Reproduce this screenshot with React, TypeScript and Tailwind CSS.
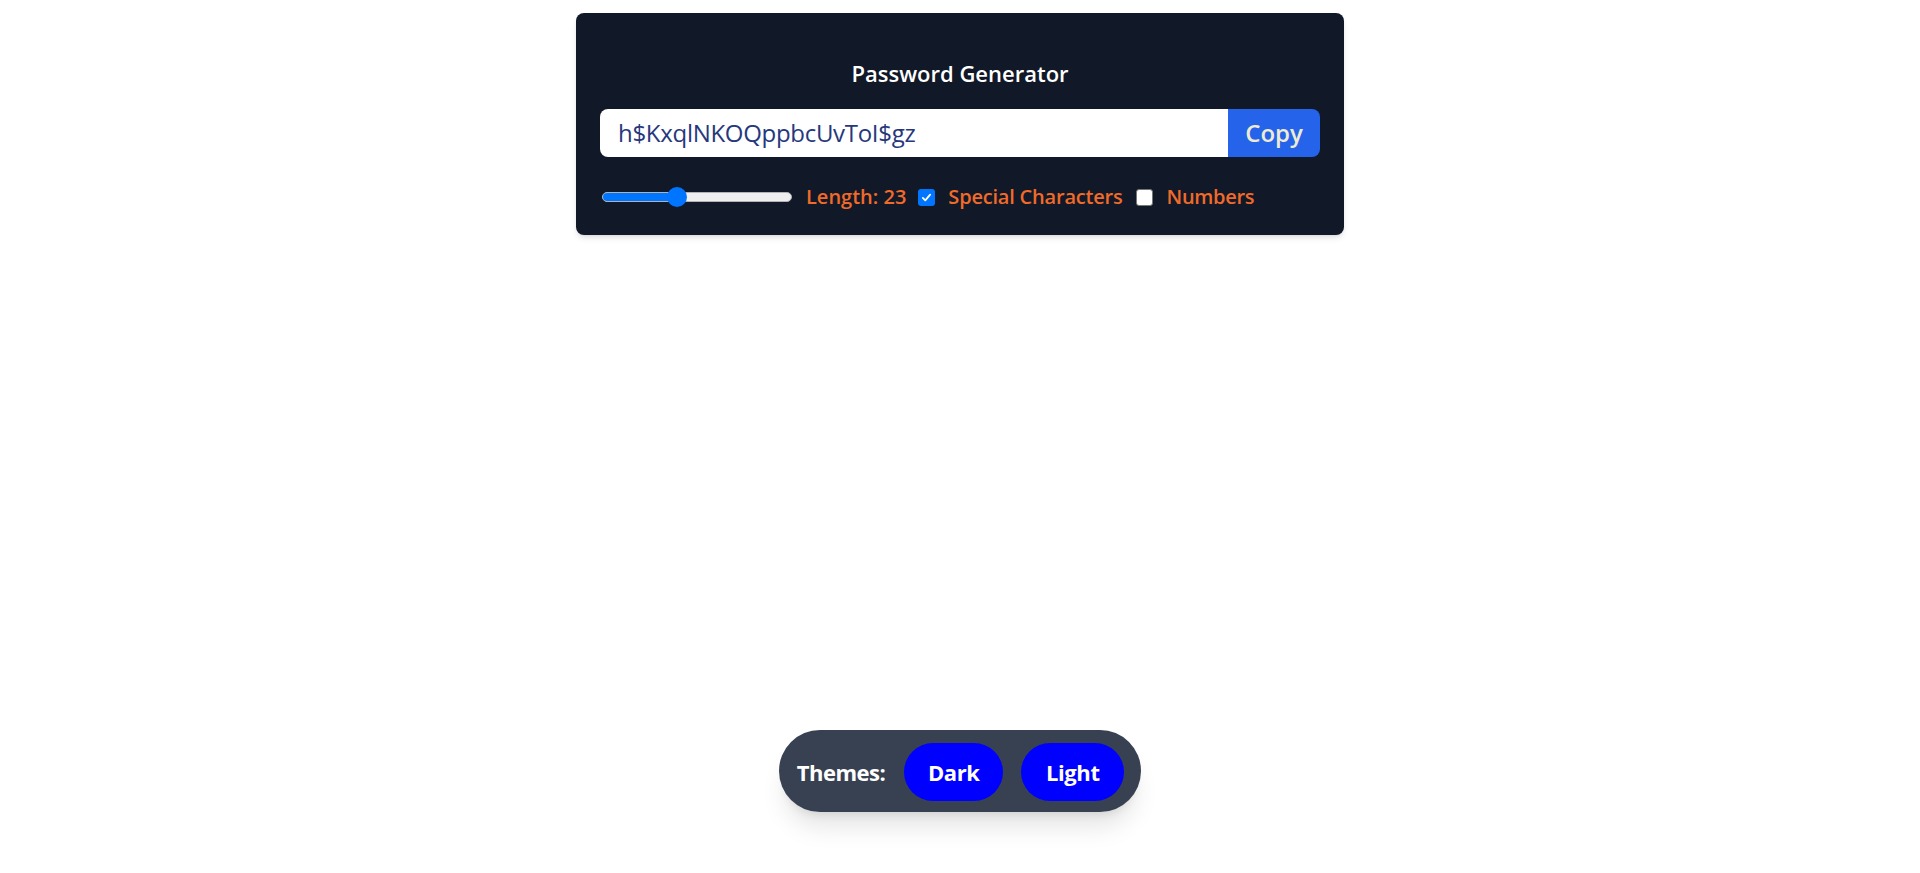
import { useState } from 'react';

function Checkbox({ checked, onToggle }: { checked: boolean; onToggle: () => void }) {
  return (
    <button
      onClick={onToggle}
      className={`w-[17px] h-[17px] rounded-[3px] flex items-center justify-center shrink-0 ${
        checked ? 'bg-[#0075ff]' : 'bg-white border border-[#767676]'
      }`}
    >
      {checked && (
        <svg viewBox="0 0 16 16" className="w-[13px] h-[13px]">
          <path d="M3.5 8.5 L6.5 11.5 L12.5 4.5" fill="none" stroke="white" strokeWidth="2.2" strokeLinecap="round" strokeLinejoin="round" />
        </svg>
      )}
    </button>
  );
}

export default function App() {
  const [length] = useState(23);
  const [special, setSpecial] = useState(true);
  const [numbers, setNumbers] = useState(false);
  const password = 'h$KxqlNKOQppbcUvToI$gz';
  const pct = ((length - 4) / (52 - 4)) * 100;

  return (
    <div className="w-full min-h-[873px] bg-white flex flex-col items-center font-['Open_Sans',sans-serif]">
      {/* Card */}
      <div className="w-[768px] mt-[13px] rounded-lg bg-[#111827] px-6 pt-[46px] pb-[24px] shadow-md">
        <h1 className="text-center text-white text-[22px] font-semibold leading-7 mb-[22px]">Password Generator</h1>

        <div className="flex h-12 rounded-lg overflow-hidden">
          <input
            readOnly
            value={password}
            className="flex-1 bg-white px-[18px] text-2xl tracking-[-0.3px] text-[#26387c] outline-none font-['Open_Sans',sans-serif]"
          />
          <button className="w-[92px] bg-[#2563eb] text-2xl font-semibold text-[#eeecd0]">Copy</button>
        </div>

        <div className="flex items-center mt-[26px] h-7 text-xl font-semibold text-[#f06a2a]">
          {/* Slider */}
          <div className="relative w-[190px] h-5 ml-[2px] flex items-center cursor-pointer">
            <div className="w-full h-[10px] rounded-full bg-[#efefef] border border-[#b2b2b2] overflow-hidden">
              <div className="h-full bg-[#0075ff]" style={{ width: `${pct}%` }} />
            </div>
            <div
              className="absolute w-5 h-5 rounded-full bg-[#0075ff] -translate-x-1/2"
              style={{ left: `${pct}%` }}
            />
          </div>
          <span className="ml-[14px]">Length: {length}</span>
          <div className="ml-[12px]">
            <Checkbox checked={special} onToggle={() => setSpecial(!special)} />
          </div>
          <span className="ml-[13px] tracking-[-0.2px]">Special Characters</span>
          <div className="ml-[13px]">
            <Checkbox checked={numbers} onToggle={() => setNumbers(!numbers)} />
          </div>
          <span className="ml-[14px] tracking-[-0.3px]">Numbers</span>
        </div>
      </div>

      <div className="flex-1" />

      {/* Theme switcher */}
      <div className="mb-[61px] flex items-center gap-[19px] rounded-full bg-[#374151] pl-[18px] pr-[17px] pt-[13px] pb-[11px] shadow-xl">
        <span className="text-white text-[22px] font-bold tracking-[-0.5px]">Themes:</span>
        <div className="flex items-center gap-[18px]">
          <button className="w-[99px] rounded-full bg-[#0000ff] py-[13px] text-[22px] font-bold text-white leading-8 tracking-[-0.4px]">Dark</button>
          <button className="w-[103px] rounded-full bg-[#0000ff] py-[13px] text-[22px] font-bold text-white leading-8 tracking-[-0.4px]">Light</button>
        </div>
      </div>
    </div>
  );
}
